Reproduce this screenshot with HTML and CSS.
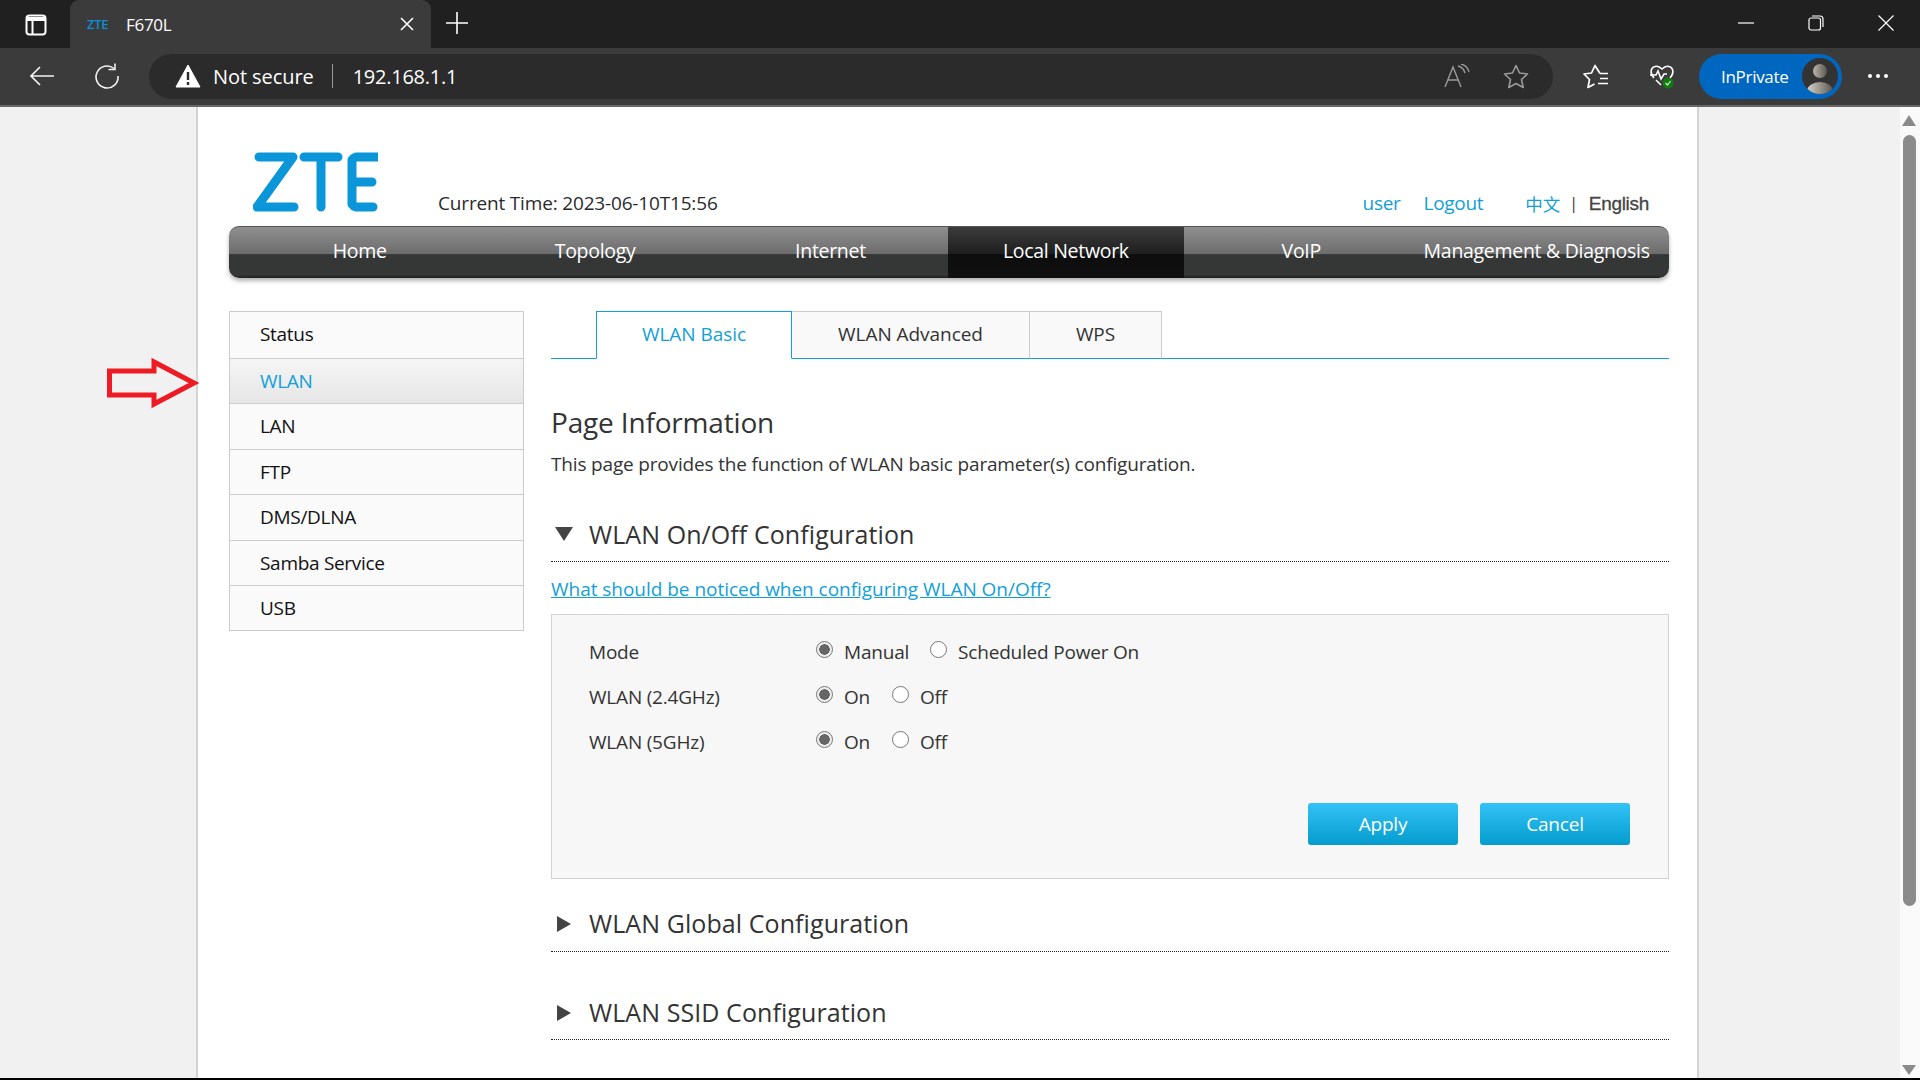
FILE: index.html
```html
<!DOCTYPE html>
<html lang="en">
<head>
<meta charset="utf-8">
<title>F670L</title>
<link rel="stylesheet" href="styles.css">
</head>
<body>
<div class="browser">
  <div class="titlebar">
    <span class="tabs-btn"><svg width="22" height="22" viewBox="0 0 22 22" fill="none" stroke="#fff" stroke-width="2"><rect x="1.5" y="1.5" width="19" height="19" rx="3"/><path d="M2 6h18M2 4h18M7.5 6v14"/></svg></span>
    <div class="browser-tab">
      <span class="favicon">ZTE</span>
      <span class="tab-title">F670L</span>
      <svg class="tab-close" width="14" height="14" viewBox="0 0 14 14" stroke="#fff" stroke-width="1.6"><path d="M1 1l12 12M13 1L1 13"/></svg>
    </div>
    <svg class="new-tab" width="22" height="22" viewBox="0 0 22 22" stroke="#fff" stroke-width="1.6"><path d="M0 11h22M11 0v22"/></svg>
    <div class="win-controls">
      <svg width="16" height="16" viewBox="0 0 16 16" stroke="#fff" stroke-width="1.2"><path d="M0 8h16"/></svg>
      <svg width="16" height="16" viewBox="0 0 16 16" fill="none" stroke="#fff" stroke-width="1.2"><rect x="1" y="3" width="11.5" height="12" rx="2"/><path d="M4 1h8a3 3 0 0 1 3 3v8"/></svg>
      <svg width="16" height="16" viewBox="0 0 16 16" stroke="#fff" stroke-width="1.2"><path d="M.5.5l15 15M15.500.5l-15 15"/></svg>
    </div>
  </div>
  <div class="toolbar">
    <svg class="back" width="26" height="22" viewBox="0 0 26 22" fill="none" stroke="#f2f2f2" stroke-width="1.7"><path d="M25 11H2M11 2l-9 9 9 9"/></svg>
    <svg class="reload" width="26" height="26" viewBox="0 0 26 26" fill="none" stroke="#f2f2f2" stroke-width="1.6"><path d="M20 5.500A11 11 0 1 0 24 13"/><path d="M21 .5v6h-6.500"/></svg>
    <div class="address">
      <svg class="warn" width="26" height="24" viewBox="0 0 26 24"><path d="M13 1L25 23H1z" fill="#fff" stroke="#fff" stroke-linejoin="round"/><path d="M13 8v8M13 18v3" stroke="#2b2b2b" stroke-width="2.400"/></svg>
      <span class="not-secure">Not secure</span>
      <span class="addr-sep"></span>
      <span class="url">192.168.1.1</span>
      <svg class="read" width="26" height="24" viewBox="0 0 26 24" fill="none" stroke="#9a9a9a" stroke-width="1.400"><path d="M1 23L9 3l8 20M4 16h10M14 2c4 1 6 3 7 7M17 0c4 1 7 4 8 8"/></svg>
      <svg class="star-a" width="26" height="25" viewBox="0 0 26 25" fill="none" stroke="#9a9a9a" stroke-width="1.600"><path d="M13 1.500l3.500 7.500 8 1-6 5.500 1.700 8L13 19.500 5.800 23.500l1.700-8-6-5.500 8-1z" stroke-linejoin="round"/></svg>
    </div>
    <svg class="fav" width="26" height="25" viewBox="0 0 26 25" fill="none" stroke="#fff" stroke-width="1.700"><path d="M17 9.500L12 1.500 8.500 9 1 10l5.500 5.500L5 23.500l6.500-3.500M17 9.500h8M17 14.500h8M15 19.500h10" stroke-linejoin="round"/></svg>
    <svg class="health" width="26" height="26" viewBox="0 0 26 26" fill="none"><path d="M5 15C1 11 1 5 6 3.500c3-1 5 .5 7 2.500 2-2 4-3.500 7-2.500 5 1.500 5 7.500 1 11.500" stroke="#fff" stroke-width="1.600"/><path d="M1 12h6l2-4 3 8 3-5h3M7 17l5 5" stroke="#fff" stroke-width="1.600"/><circle cx="19" cy="20" r="5.500" fill="#107c10"/><path d="M16.500 20l2 2 3-4" stroke="#cfe8cf" stroke-width="1.200"/></svg>
    <div class="inprivate">
      <span class="ip-label">InPrivate</span>
      <span class="avatar"><span class="av-head"></span><span class="av-body"></span></span>
    </div>
    <svg class="more" width="20" height="4" viewBox="0 0 20 4" fill="#fff"><circle cx="2" cy="2" r="2"/><circle cx="10" cy="2" r="2"/><circle cx="18" cy="2" r="2"/></svg>
  </div>

  <div class="viewport">
    <div class="stage">
      <div class="card">
        <header class="head">
          <svg class="logo" width="125" height="60" viewBox="0 0 125 60" fill="none" stroke="#0a96d8" stroke-width="9" stroke-linecap="round" stroke-linejoin="round"><path d="M7 5h34L5 55h37M52 5h34M69 5v50M125 5h-21a7 7 0 0 0-4 3v44a7 7 0 0 0 4 3h17M100 30h20" transform="translate(-1 0)"/></svg>
          <span class="clock">Current Time: 2023-06-10T15:56</span>
          <div class="head-links">
            <a class="lnk lnk-user">user</a>
            <a class="lnk lnk-logout">Logout</a>
            <a class="lnk lnk-cn">中文</a>
            <span class="lang-sep">|</span>
            <span class="lang-en">English</span>
          </div>
        </header>

        <nav class="nav">
          <a class="nav-item">Home</a>
          <a class="nav-item">Topology</a>
          <a class="nav-item">Internet</a>
          <a class="nav-item is-active">Local Network</a>
          <a class="nav-item">VoIP</a>
          <a class="nav-item">Management &amp; Diagnosis</a>
        </nav>

        <div class="content">
          <ul class="side">
            <li class="side-item">Status</li>
            <li class="side-item is-current">WLAN</li>
            <li class="side-item">LAN</li>
            <li class="side-item">FTP</li>
            <li class="side-item">DMS/DLNA</li>
            <li class="side-item">Samba Service</li>
            <li class="side-item">USB</li>
          </ul>

          <main class="main">
            <div class="subtabs">
              <a class="subtab subtab-1 is-on">WLAN Basic</a>
              <a class="subtab subtab-2">WLAN Advanced</a>
              <a class="subtab subtab-3">WPS</a>
            </div>
            <h1 class="page-title">Page Information</h1>
            <p class="page-desc">This page provides the function of WLAN basic parameter(s) configuration.</p>

            <h2 class="sec sec-first"><span class="tri tri-down"></span>WLAN On/Off Configuration</h2>
            <a class="notice">What should be noticed when configuring WLAN On/Off?</a>

            <div class="panel">
              <div class="row">
                <span class="row-label">Mode</span>
                <span class="radio on"></span><span class="opt opt-a">Manual</span>
                <span class="radio"></span><span class="opt">Scheduled Power On</span>
              </div>
              <div class="row">
                <span class="row-label">WLAN (2.4GHz)</span>
                <span class="radio on"></span><span class="opt opt-b">On</span>
                <span class="radio"></span><span class="opt">Off</span>
              </div>
              <div class="row">
                <span class="row-label">WLAN (5GHz)</span>
                <span class="radio on"></span><span class="opt opt-b">On</span>
                <span class="radio"></span><span class="opt">Off</span>
              </div>
              <div class="actions">
                <button class="btn">Apply</button>
                <button class="btn">Cancel</button>
              </div>
            </div>

            <h2 class="sec sec-next"><span class="tri tri-right"></span>WLAN Global Configuration</h2>
            <h2 class="sec sec-last"><span class="tri tri-right"></span>WLAN SSID Configuration</h2>
          </main>
        </div>
      </div>
      <svg class="red-arrow" width="96" height="52" viewBox="0 0 96 52" fill="none" stroke="#ed1c24" stroke-width="5"><path d="M2.500 14H47V5L87 26 47 47V38H2.500z" stroke-linejoin="miter"/></svg>
    </div>
    <div class="scrollbar">
      <span class="sb-up"></span>
      <span class="sb-thumb"></span>
      <span class="sb-down"></span>
    </div>
  </div>
  <div class="bottom-edge"></div>
</div>
</body>
</html>
```
FILE: styles.css
```css
* { box-sizing: border-box; }
html, body { margin: 0; height: 100%; overflow: hidden; }
body { font-family: "Open Sans", "Noto Sans", "Noto Sans CJK SC", sans-serif; color: #222; }
.browser { width: 1920px; height: 1080px; display: flex; flex-direction: column; background: #f1f1f1; }

/* title bar */
.titlebar { height: 48px; flex: none; background: #202020; display: flex; align-items: flex-end; }
.tabs-btn { width: 22px; height: 22px; margin: 0 0 12px 25px; display: block; }
.tabs-btn svg { display: block; }
.browser-tab { width: 361px; height: 48px; margin-left: 23px; background: #3b3b3b; border-radius: 9px 9px 0 0; display: flex; align-items: center; padding-left: 17px; color: #fff; }
.favicon { width: 39px; font-size: 13px; letter-spacing: -.3px; color: #0a8fd8; font-weight: 600; }
.tab-title { flex: 1; font-size: 17px; letter-spacing: -.3px; }
.tab-close { margin-right: 17px; }
.new-tab { margin: 0 0 14px 15px; }
.win-controls { margin: 0 26px 17px auto; display: flex; gap: 54px; }
.win-controls svg { display: block; }

/* toolbar */
.toolbar { height: 59px; flex: none; background: #3b3b3b; border-bottom: 2px solid #666; display: flex; align-items: center; padding-bottom: 1px; position: relative; }
.back { margin-left: 29px; }
.reload { margin-left: 39px; }
.address { width: 1404px; height: 45px; margin-left: 29px; border-radius: 23px; background: #2b2b2b; display: flex; align-items: center; color: #fff; padding-left: 26px; }
.not-secure { margin-left: 12px; font-size: 20px; letter-spacing: -.08px; }
.addr-sep { width: 1px; height: 24px; background: #9a9a9a; margin: 0 20px 0 18px; }
.url { font-size: 20px; letter-spacing: -.25px; }
.read { margin-left: auto; }
.star-a { margin: 0 24px 0 33px; }
.fav { margin-left: 30px; }
.health { margin-left: 40px; }
.inprivate { width: 143px; height: 45px; margin-left: 24px; border-radius: 23px; background: #0067c0; display: flex; align-items: center; padding-left: 22px; color: #fff; }
.ip-label { font-size: 17px; letter-spacing: -.3px; }
.avatar { width: 36px; height: 36px; margin-left: auto; margin-right: 4px; border-radius: 50%; background: #333; position: relative; overflow: hidden; display: block; }
.av-head { position: absolute; left: 11px; top: 6px; width: 14px; height: 14px; border-radius: 50%; background: linear-gradient(90deg, #b9b5ac, #5b5750); }
.av-body { position: absolute; left: 5px; top: 24px; width: 26px; height: 18px; border-radius: 50%; background: linear-gradient(90deg, #d6d3ca, #5b5750); }
.more { margin-left: 26px; }

/* viewport */
.viewport { flex: 1; min-height: 0; display: flex; }
.stage { flex: 1; min-width: 0; position: relative; overflow: hidden; }
.card { width: 1503px; height: 100%; margin-left: 196px; padding-left: 31px; background: #fff; border-left: 2px solid #d4d4d4; border-right: 2px solid #d4d4d4; }
.red-arrow { position: absolute; left: 107px; top: 250px; }
.scrollbar { width: 20px; flex: none; padding-right: 2px; background: #fafafa; display: flex; flex-direction: column; align-items: center; position: relative; }
.sb-up { margin-top: 8px; width: 0; height: 0; border: 7px solid transparent; border-top: 0; border-bottom: 11px solid #8b8b8b; }
.sb-thumb { width: 13px; height: 771px; margin-top: 9px; border-radius: 7px; background: #8b8b8b; }
.sb-down { margin-top: auto; margin-bottom: 3px; width: 0; height: 0; border: 7px solid transparent; border-bottom: 0; border-top: 10px solid #8b8b8b; }
.bottom-edge { height: 2px; flex: none; background: #000; }

/* header */
.head { height: 119px; width: 1440px; display: flex; align-items: flex-end; padding-bottom: 14px; position: relative; }
.logo { margin-left: 24px; flex: none; }
.clock { margin-left: 60px; font-size: 19px; line-height: 26px; letter-spacing: -.17px; color: #2b2b2b; margin-bottom: -4px; }
.head-links { margin-left: auto; margin-bottom: -5px; display: flex; align-items: center; font-size: 19px; line-height: 26px; letter-spacing: -.3px; padding-right: 20px; }
.lnk { color: #12a0d8; }
.lnk-user { margin-right: 23px; }
.lnk-logout { margin-right: 42px; }
.lnk-cn { font-family: "Noto Sans CJK SC", sans-serif; font-size: 17.500px; letter-spacing: 0; margin-top: 2px; }
.lang-sep { margin: 0 11px 0 9px; font-size: 16px; color: #333; }
.lang-en { color: #444; font-family: "Liberation Sans", sans-serif; font-size: 19px; letter-spacing: -.3px; font-weight: 400; -webkit-text-stroke: .3px #444; margin-top: 2px; }

/* nav */
.nav { width: 1440px; height: 52px; padding-left: 13px; display: flex; border-radius: 10px; background: linear-gradient(#8f8f8f 0, #6c6c6c 53%, #353737 54%, #353737 94%, #1e1f1f 100%); box-shadow: 0 3px 4px rgba(0,0,0,.3); border-top: 1px solid #555; }
.nav-item { width: 235.400px; text-align: center; color: #fff; font-size: 19.500px; line-height: 48px; letter-spacing: -.3px; }
.nav-item.is-active { background: linear-gradient(#3c3c3c 0, #1e1e1e 53%, #0d0d0d 54%, #111 100%); }

/* body */
.content { width: 1440px; display: flex; gap: 27px; margin-top: 33px; }
.side { width: 295px; flex: none; margin: 0; padding: 0; list-style: none; border: 1px solid #ccc; align-self: flex-start; }
.side-item { height: 45.400px; padding-left: 30px; font-size: 19px; line-height: 44px; letter-spacing: -.3px; color: #111; background: #fafafa; border-top: 1px solid #ccc; }
.side-item:first-child { border-top: 0; height: 46px; }
.side-item.is-current { color: #12a0d8; background: linear-gradient(#f5f5f5, #e6e6e6); }

.main { flex: 1; min-width: 0; }
.subtabs { height: 48px; padding-left: 45px; display: flex; border-bottom: 1px solid #12a0d8; }
.subtab { height: 48px; font-size: 19px; line-height: 45px; letter-spacing: -.05px; text-align: center; color: #333; background: #f9f9f9; border: 1px solid #ccc; border-bottom-color: #12a0d8; border-left: 0; }
.subtab-1 { width: 196px; }
.subtab-2 { width: 238px; }
.subtab-3 { width: 132px; }
.subtab.is-on { color: #12a0d8; background: #fff; border: 1px solid #12a0d8; border-bottom-color: #fff; }

.page-title { margin: 45px 0 0; font-size: 28px; line-height: 36px; font-weight: 400; letter-spacing: -.17px; color: #333; }
.page-desc { margin: 11px 0 0; font-size: 19px; line-height: 26px; letter-spacing: -.17px; color: #333; }

.sec { margin: 0; height: 45px; display: flex; align-items: center; font-size: 25px; font-weight: 400; letter-spacing: .08px; color: #333; border-bottom: 1px dotted #222; padding-bottom: 10px; }
.sec-first { margin-top: 40px; }
.sec-next { margin-top: 22px; height: 51px; align-items: flex-start; padding: 5px 0 0; }
.sec-last { margin-top: 38px; height: 50px; align-items: flex-start; padding: 5px 0 0; }
.tri { width: 0; height: 0; margin: 0 16px 0 4px; border-style: solid; border-color: transparent; flex: none; }
.tri-down { border-width: 14px 9px 0; border-top-color: #444; }
.tri-right { border-width: 8px 0 8px 14px; border-left-color: #444; margin: 10px 18px 0 6px; width: 0; }
.notice { display: block; margin-top: 14px; font-size: 19px; line-height: 26px; letter-spacing: -.03px; color: #12a0d8; text-decoration: underline; }

.panel { height: 265px; margin-top: 12px; padding: 15px 38px 0 37px; background: #f7f7f7; border: 1px solid #d2d2d2; display: flex; flex-direction: column; }
.row { height: 44.800px; flex: none; display: flex; align-items: center; font-size: 19px; letter-spacing: -.2px; color: #333; }
.row-label { width: 227px; flex: none; }
.radio { width: 17px; height: 17px; border-radius: 50%; border: 1px solid #777; background: #fff; flex: none; margin-top: -5px; }
.radio.on { background: radial-gradient(circle, #666 0 5px, #eee 5.500px); }
.opt { margin-left: 11px; }
.opt-a { margin-right: 21px; }
.opt-b { margin-right: 22px; }
.actions { margin-top: auto; margin-bottom: 33px; display: flex; justify-content: flex-end; gap: 22px; }
.btn { width: 150px; height: 42px; border: 0; border-radius: 3px; color: #fff; font: 400 19px "Open Sans", sans-serif; letter-spacing: -.2px; background: linear-gradient(#33c2f6, #049cce); padding: 0; }
```
